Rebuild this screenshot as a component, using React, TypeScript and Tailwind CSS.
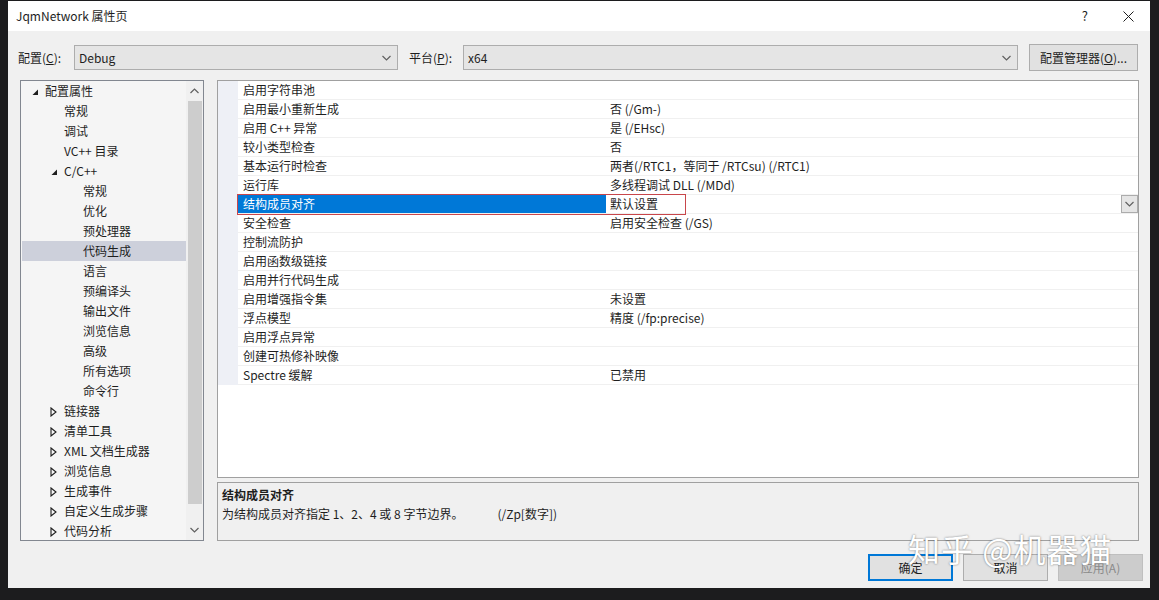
import React from "react";

const FONT = "font-['Segoe_UI','Noto_Sans_CJK_SC',sans-serif]";

type TreeItem = { label: string; level: number; expand?: "open" | "closed"; selected?: boolean };

const TREE: TreeItem[] = [
  { label: "配置属性", level: 0, expand: "open" },
  { label: "常规", level: 1 },
  { label: "调试", level: 1 },
  { label: "VC++ 目录", level: 1 },
  { label: "C/C++", level: 1, expand: "open" },
  { label: "常规", level: 2 },
  { label: "优化", level: 2 },
  { label: "预处理器", level: 2 },
  { label: "代码生成", level: 2, selected: true },
  { label: "语言", level: 2 },
  { label: "预编译头", level: 2 },
  { label: "输出文件", level: 2 },
  { label: "浏览信息", level: 2 },
  { label: "高级", level: 2 },
  { label: "所有选项", level: 2 },
  { label: "命令行", level: 2 },
  { label: "链接器", level: 1, expand: "closed" },
  { label: "清单工具", level: 1, expand: "closed" },
  { label: "XML 文档生成器", level: 1, expand: "closed" },
  { label: "浏览信息", level: 1, expand: "closed" },
  { label: "生成事件", level: 1, expand: "closed" },
  { label: "自定义生成步骤", level: 1, expand: "closed" },
  { label: "代码分析", level: 1, expand: "closed" },
];

const PROPS: [string, string][] = [
  ["启用字符串池", ""],
  ["启用最小重新生成", "否 (/Gm-)"],
  ["启用 C++ 异常", "是 (/EHsc)"],
  ["较小类型检查", "否"],
  ["基本运行时检查", "两者(/RTC1，等同于 /RTCsu) (/RTC1)"],
  ["运行库", "多线程调试 DLL (/MDd)"],
  ["结构成员对齐", "默认设置"],
  ["安全检查", "启用安全检查 (/GS)"],
  ["控制流防护", ""],
  ["启用函数级链接", ""],
  ["启用并行代码生成", ""],
  ["启用增强指令集", "未设置"],
  ["浮点模型", "精度 (/fp:precise)"],
  ["启用浮点异常", ""],
  ["创建可热修补映像", ""],
  ["Spectre 缓解", "已禁用"],
];

const PAD = ["pl-[23px]", "pl-[42px]", "pl-[61px]"];

function Chevron({ up = false }: { up?: boolean }) {
  return (
    <svg width="9" height="6" viewBox="0 0 9 6" className="shrink-0">
      <path
        d={up ? "M0.5 5 L4.5 1 L8.5 5" : "M0.5 1 L4.5 5 L8.5 1"}
        fill="none"
        stroke="#606060"
        strokeWidth="1.2"
      />
    </svg>
  );
}

function Expander({ kind }: { kind: "open" | "closed" }) {
  if (kind === "open") {
    return (
      <svg width="7" height="7" viewBox="0 0 7 7" className="absolute left-[-13px] top-[7px]">
        <polygon points="6,0.5 6,6 0.5,6" fill="#1e1e1e" />
      </svg>
    );
  }
  return (
    <svg width="7" height="10" viewBox="0 0 7 10" className="absolute left-[-14px] top-[5px]">
      <polygon points="1,1 6,5 1,9" fill="none" stroke="#1e1e1e" strokeWidth="1.1" />
    </svg>
  );
}

function Combo({ value, width }: { value: string; width: string }) {
  return (
    <div
      className={`${width} h-[25px] flex items-center justify-between border border-[#adadad] bg-[#e5e5e5] pl-[4px] pr-[6px] text-[12px] text-[#1e1e1e]`}
    >
      <span>{value}</span>
      <Chevron />
    </div>
  );
}

export default function App() {
  return (
    <div className={`relative w-[1159px] h-[600px] overflow-hidden bg-[#1c1c1e] ${FONT} text-[12px] text-[#1e1e1e]`}>
      <div className="flex pt-[1px]">
        <div className="w-[8px] shrink-0" />
        <div className="w-[1142px] h-[587px] flex flex-col bg-[#f0f0f0]">
          {/* title bar */}
          <div className="h-[30px] shrink-0 bg-white flex items-center pl-[8px] pr-[16px]">
            <span className="text-[12px] text-[#1e1e1e]">JqmNetwork 属性页</span>
            <span className="ml-auto text-[13px] text-[#1e1e1e]">?</span>
            <svg width="11" height="11" viewBox="0 0 11 11" className="ml-[35px]">
              <path d="M0.5 0.5 L10.5 10.5 M10.5 0.5 L0.5 10.5" stroke="#1e1e1e" strokeWidth="1" />
            </svg>
          </div>

          {/* configuration row */}
          <div className="mt-[13px] h-[27px] flex items-center pl-[10px]">
            <span className="w-[56px]">
              配置(<span className="underline">C</span>):
            </span>
            <Combo value="Debug" width="w-[324px]" />
            <span className="ml-[11px] w-[54px]">
              平台(<span className="underline">P</span>):
            </span>
            <Combo value="x64" width="w-[555px]" />
            <div className="ml-[11px] w-[109px] h-[27px] flex items-center justify-center border border-[#adadad] bg-[#e1e1e1]">
              配置管理器(<span className="underline">O</span>)...
            </div>
          </div>

          {/* main area */}
          <div className="mt-[9px] h-[461px] flex pl-[12px]">
            {/* tree */}
            <div className="w-[184px] h-[461px] flex border border-[#828790] bg-[#f5f5f5] overflow-hidden">
              <div className="flex-1 flex flex-col pl-[1px]">
                {TREE.map((t, i) => (
                  <div
                    key={i}
                    className={`relative shrink-0 h-[20px] leading-[20px] whitespace-nowrap ${PAD[t.level]} ${
                      t.selected ? "bg-[#cdd0db]" : ""
                    }`}
                  >
                    <span className="relative">
                      {t.expand && <Expander kind={t.expand} />}
                      {t.label}
                    </span>
                  </div>
                ))}
              </div>
              <div className="w-[17px] shrink-0 flex flex-col items-center bg-[#f0f0f0]">
                <div className="h-[20px] flex items-center">
                  <Chevron up />
                </div>
                <div className="w-[14px] h-[403px] bg-[#cdcdcd]" />
                <div className="flex-1" />
                <div className="h-[20px] flex items-center">
                  <Chevron />
                </div>
              </div>
            </div>

            {/* property grid + description */}
            <div className="ml-[13px] w-[922px] flex flex-col">
              <div className="h-[398px] flex flex-col border border-[#a0a0a0] bg-white">
                {PROPS.map(([name, value], i) => {
                  const sel = i === 6;
                  return (
                    <div key={i} className="shrink-0 h-[19px] flex">
                      <div className="w-[20px] shrink-0 bg-[#eef0f6]" />
                      <div className="relative flex-1 flex border-b border-[#f0f0f0]">
                        <div
                          className={`w-[368px] shrink-0 pl-[5px] leading-[18px] ${
                            sel ? "bg-[#0078d7] text-white" : ""
                          }`}
                        >
                          {name}
                        </div>
                        <div className="flex-1 flex items-center pl-[4px] leading-[18px]">
                          <span>{value}</span>
                          {sel && (
                            <div className="ml-auto w-[17px] h-[18px] flex items-center justify-center border border-[#acacac] bg-[#e5e5e5]">
                              <Chevron />
                            </div>
                          )}
                        </div>
                        {sel && (
                          <div className="absolute left-[-1px] top-[-1px] w-[449px] h-[21px] border border-[#c8464b]" />
                        )}
                      </div>
                    </div>
                  );
                })}
              </div>
              <div className="mt-[4px] h-[59px] border border-[#a0a0a0] bg-[#f0f0f0] px-[4px] pt-[2px]">
                <div className="font-bold leading-[19px]">结构成员对齐</div>
                <div className="leading-[19px] whitespace-nowrap">
                  <span>为结构成员对齐指定 1、2、4 或 8 字节边界。</span>
                  <span className="ml-[34px]">(/Zp[数字])</span>
                </div>
              </div>
            </div>
          </div>

          {/* buttons */}
          <div className="mt-[13px] h-[27px] flex justify-end pr-[7px] gap-[10px]">
            <div className="w-[85px] h-[27px] flex items-center justify-center border-2 border-[#0078d7] bg-[#e1e1e1]">
              确定
            </div>
            <div className="w-[85px] h-[27px] flex items-center justify-center border border-[#adadad] bg-[#e1e1e1]">
              取消
            </div>
            <div className="w-[85px] h-[27px] flex items-center justify-center border border-[#bfbfbf] bg-[#cccccc] text-[#8a8a8a]">
              应用(A)
            </div>
          </div>
        </div>
      </div>

      {/* watermark */}
      <div className="absolute left-[908px] top-[528px] text-[32px] leading-[40px] text-white tracking-[1px] [text-shadow:0_0_2px_rgba(0,0,0,0.55)] whitespace-nowrap font-['Noto_Sans_CJK_SC',sans-serif]">
        知乎 @机器猫
      </div>
    </div>
  );
}
